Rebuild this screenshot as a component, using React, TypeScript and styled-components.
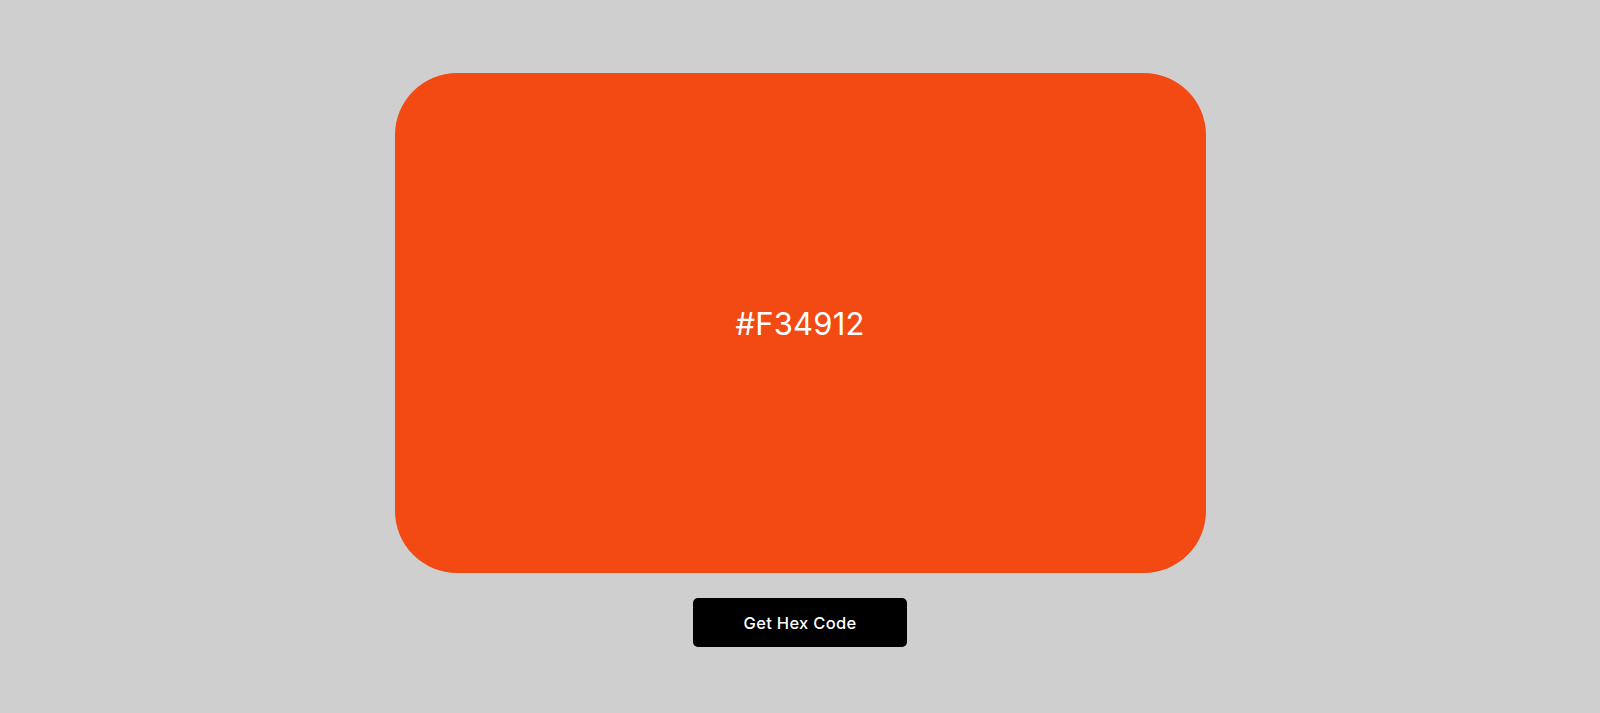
import React from "react";
import styled, { createGlobalStyle } from "styled-components";

const Global = createGlobalStyle`
  html, body { margin: 0; padding: 0; }
  body {
    background: #cfcfcf;
    font-family: "Inter", "Open Sans", sans-serif;
  }
`;

const Page = styled.main`
  min-height: 713px;
  display: flex;
  flex-direction: column;
  align-items: center;
  padding-top: 73px;
  box-sizing: border-box;
  gap: 25px;
`;

const Swatch = styled.div<{ $color: string }>`
  width: 811px;
  height: 500px;
  border-radius: 62px;
  background: ${(p) => p.$color};
  display: flex;
  align-items: center;
  justify-content: center;
`;

const HexLabel = styled.span`
  color: #ffffff;
  font-family: "Inter", "Open Sans", sans-serif;
  font-size: 31px;
  font-weight: 400;
  letter-spacing: 0.2px;
`;

const Button = styled.button`
  width: 214px;
  height: 49px;
  border: none;
  border-radius: 5px;
  background: #000;
  color: #fff;
  font-family: "Inter", "Open Sans", sans-serif;
  font-size: 16.5px;
  font-weight: 500;
  letter-spacing: 0.3px;
  cursor: pointer;
`;

export default function App() {
  const color = "#F34912";
  return (
    <>
      <Global />
      <Page>
        <Swatch $color={color}>
          <HexLabel>{color}</HexLabel>
        </Swatch>
        <Button>Get Hex Code</Button>
      </Page>
    </>
  );
}
